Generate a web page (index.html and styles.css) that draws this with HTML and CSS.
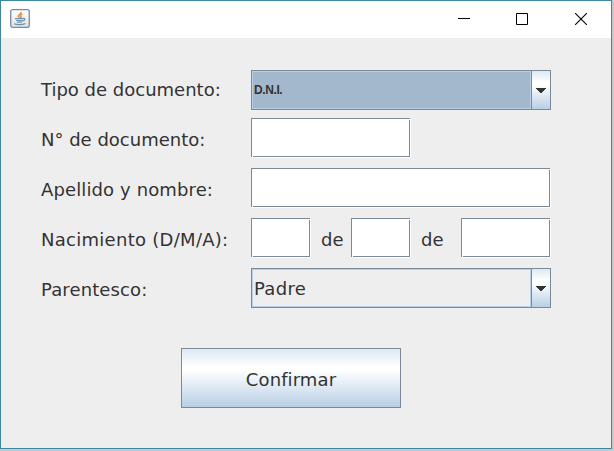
FILE: index.html
```html
<!DOCTYPE html>
<html lang="es">
<head>
<meta charset="utf-8">
<title>Documento</title>
<link rel="stylesheet" href="styles.css">
</head>
<body>
<main class="window">
  <header class="titlebar">
    <svg class="app-icon" width="20" height="19" viewBox="0 0 20 19">
      <defs><linearGradient id="tile" x1="0" y1="0" x2="0" y2="1"><stop offset="0" stop-color="#fff"/><stop offset="1" stop-color="#dde3e7"/></linearGradient></defs>
      <rect x=".7" y=".7" width="18.6" height="17.6" rx="2" fill="url(#tile)" stroke="#788d9d" stroke-width="1.3"/>
      <path d="M10.800 3c1 2-3.300 3-2.400 4.500l1 1.300M12.300 5c-2 1-2.400 2-1.200 3.200l-.7 1" fill="none" stroke="#e9954f" stroke-width="1.7"/>
      <path d="M5 9.700h8.500M6 11.500h6.500M7 13.200h5M13 9.500c2.600-.7 2.400 2-.5 2.600M4 14.800c2.500 1.200 8.500 1.200 11.500-.3" fill="none" stroke="#6e91ad" stroke-width="1.2"/>
    </svg>
    <div class="controls">
      <svg width="12" height="12" viewBox="0 0 12 12" shape-rendering="crispEdges"><path d="M0 5h12v1H0z"/></svg>
      <svg width="12" height="12" viewBox="0 0 12 12"><path d="M.5.5h11v11H.5z" fill="none" stroke="#000"/></svg>
      <svg class="close" width="12" height="12" viewBox="0 0 12 12"><path d="M0 0l12 12M12 0L0 12" fill="none" stroke="#000" stroke-width="1.1"/></svg>
    </div>
  </header>
  <form class="form">
    <div class="row first"><span class="label">Tipo de documento:</span>
      <div class="combo focused"><span class="value small">D.N.I.</span><span class="arrow"><svg width="10" height="5" viewBox="0 0 10 5" shape-rendering="crispEdges"><path d="M0 0h10v1H9v1H8v1H7v1H6v1H4V4H3V3H2V2H1V1H0z"/></svg></span></div></div>
    <div class="row"><span class="label">N° de documento:</span><div class="field medium"></div></div>
    <div class="row"><span class="label apellido">Apellido y nombre:</span><div class="field wide"></div></div>
    <div class="row"><span class="label nacimiento">Nacimiento (D/M/A):</span>
      <div class="field day"></div><span class="de">de</span><div class="field day"></div><span class="de last">de</span><div class="field year"></div></div>
    <div class="row"><span class="label parentesco">Parentesco:</span>
      <div class="combo"><span class="value large">Padre</span><span class="arrow"><svg width="10" height="5" viewBox="0 0 10 5" shape-rendering="crispEdges"><path d="M0 0h10v1H9v1H8v1H7v1H6v1H4V4H3V3H2V2H1V1H0z"/></svg></span></div></div>
    <button class="confirm" type="button">Confirmar</button>
  </form>
</main>
</body>
</html>
```
FILE: styles.css
```css
* { box-sizing: border-box; }
body {
  margin: 0;
  height: 451px;
  overflow: hidden;
  background: #c8c8c8;
  font: 18px/24px "DejaVu Sans", sans-serif;
  color: #333;
}
.window {
  width: 612px;
  height: 449px;
  border: 1px solid #3d87a5;
  background: #eee;
}
.titlebar {
  height: 37px;
  padding: 8px 24px 0 9px;
  display: flex;
  justify-content: space-between;
  background: #fff;
}
.app-icon { display: block; }
.controls { display: flex; gap: 46px; padding-top: 4px; }
.controls svg { display: block; }
.controls .close { margin-left: 1px; }
.form {
  padding: 32px 0 0 40px;
  display: flex;
  flex-direction: column;
  gap: 10px;
}
.row { display: flex; height: 40px; align-items: center; }
.row.first { margin-bottom: -2px; }
.label { width: 210px; white-space: nowrap; flex: none; padding-top: 4px; }
.first .label { padding-top: 0; }
.apellido { letter-spacing: .12px; }
.nacimiento { letter-spacing: .28px; }
.parentesco { letter-spacing: .12px; }
.combo {
  width: 300px;
  height: 40px;
  display: flex;
  border: 1px solid #7a8a99;
}
.value {
  flex: 1;
  display: flex;
  align-items: center;
  border: 1px solid #b8cfe5;
  padding-left: 1px;
}
.focused .value { background: #a3b8cc; }
.small { font: bold 12px/16px "Liberation Sans", sans-serif; letter-spacing: -.4px; }
.large { padding-top: 2px; letter-spacing: .3px; }
.arrow {
  width: 19px;
  display: flex;
  align-items: center;
  justify-content: center;
  border-left: 1px solid #7a8a99;
  background: linear-gradient(#dde8f3, #fff 30%, #fff 36%, #b8cfe5);
}
.arrow svg { fill: #333; margin-top: 1px; }
.field {
  height: 40px;
  flex: none;
  background:
    linear-gradient(#fff, #fff) 1px calc(100% - 1px) / 1px 1px no-repeat,
    linear-gradient(#fff, #fff) calc(100% - 1px) 1px / 1px 1px no-repeat,
    linear-gradient(#eee, #eee) 0 100% / 1px 1px no-repeat,
    linear-gradient(#eee, #eee) 100% 0 / 1px 1px no-repeat,
    linear-gradient(#fff, #fff) 0 100% / 100% 1px no-repeat,
    linear-gradient(#fff, #fff) 100% 0 / 1px 100% no-repeat,
    linear-gradient(#fff, #fff) 1px 1px / calc(100% - 3px) calc(100% - 3px) no-repeat,
    #7a8a99;
}
.medium { width: 160px; }
.wide { width: 300px; }
.day { width: 60px; }
.year { width: 90px; }
.de { width: 40px; padding: 4px 0 0 10px; }
.last { width: 50px; }
.confirm {
  width: 220px;
  height: 60px;
  margin: 30px 0 0 140px;
  padding: 4px 0 0;
  border: 1px solid #7a8a99;
  background: linear-gradient(#dde8f3, #fff 30%, #fff 36%, #b8cfe5);
  font: inherit;
  color: inherit;
  letter-spacing: .1px;
}
```
